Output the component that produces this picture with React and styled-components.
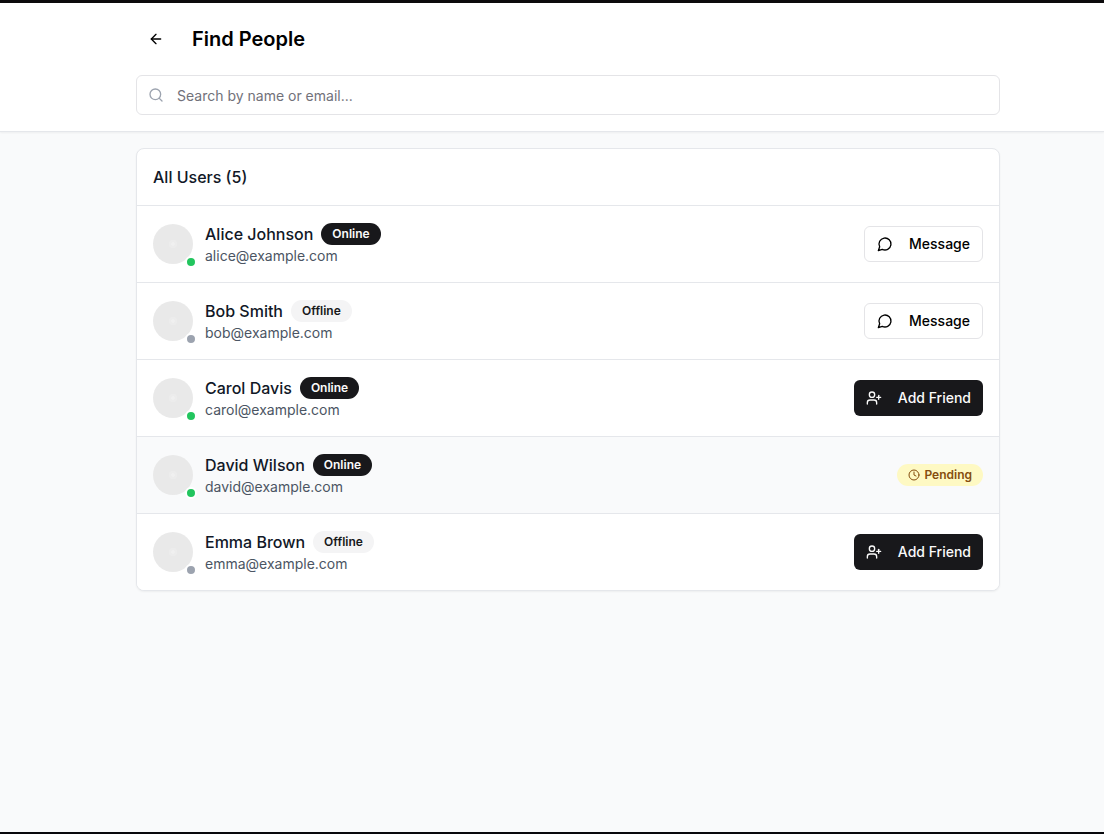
import React from "react";
import styled, { createGlobalStyle, css } from "styled-components";
import { ArrowLeft, Search, UserPlus, Clock } from "lucide-react";

const GlobalStyle = createGlobalStyle`
  *, *::before, *::after { box-sizing: border-box; }
  body {
    margin: 0;
    background: #f9fafb;
    color: #000;
    font-family: Inter, "Liberation Sans", sans-serif;
    font-size: 16px;
    line-height: 24px;
  }
`;

const Page = styled.div`
  height: 100vh;
  overflow: hidden;
  background: #f9fafb;
  border-top: 3px solid #0c0b0c;
  border-bottom: 2px solid #08080c;
`;

const Header = styled.header`
  background: #fff;
  border-bottom: 1px solid #e5e7eb;
  box-shadow: 0 1px 2px 0 rgba(0, 0, 0, 0.05);
`;

const Container = styled.div`
  width: 896px;
  margin: 0 88px 0 auto;
  padding: 16px;
`;

const TitleBar = styled.div`
  display: flex;
  align-items: center;
  gap: 16px;
  margin-bottom: 16px;
`;

const BackButton = styled.button`
  display: flex;
  align-items: center;
  justify-content: center;
  width: 40px;
  height: 40px;
  padding: 0;
  border: 0;
  border-radius: 6px;
  background: transparent;
  color: #000;
`;

const Title = styled.h1`
  margin: 0;
  font-size: 20px;
  line-height: 28px;
  font-weight: 600;
`;

const SearchField = styled.label`
  display: flex;
  align-items: center;
  gap: 13px;
  height: 40px;
  padding: 0 12px 0 11px;
  border: 1px solid #e4e4e7;
  border-radius: 6px;
  background: #fff;
  color: #9ca3af;
`;

const SearchInput = styled.input`
  flex: 1;
  height: 20px;
  margin: 1px 0 0;
  padding: 0;
  border: 0;
  outline: 0;
  background: transparent;
  color: #000;
  font: inherit;
  font-size: 14px;
  line-height: 20px;
  &::placeholder { color: #71717a; opacity: 1; }
`;

const Card = styled.section`
  background: #fff;
  border: 1px solid #e5e7eb;
  border-radius: 8px;
  box-shadow: 0 1px 2px 0 rgba(0, 0, 0, 0.05);
  overflow: hidden;
`;

const CardTitle = styled.h2`
  margin: 0;
  padding: 16px;
  font-size: 16px;
  line-height: 24px;
  font-weight: 500;
  color: #111827;
`;

const Row = styled.div`
  display: flex;
  align-items: center;
  justify-content: space-between;
  padding: 16px;
  border-top: 1px solid #e5e7eb;
  background: ${(p) => (p.$highlighted ? "#f9fafb" : "#fff")};
`;

const Person = styled.div`
  display: flex;
  align-items: center;
  gap: 12px;
`;

const Avatar = styled.div`
  position: relative;
  width: 40px;
  height: 40px;
  border-radius: 50%;
  background: radial-gradient(circle, #f0f0f0 0 1.5px, #ececec 2px 4px, #e9e9e9 4.5px);
`;

const StatusDot = styled.span`
  position: absolute;
  right: -4px;
  bottom: -4px;
  width: 12px;
  height: 12px;
  border: 2px solid #fff;
  border-radius: 50%;
  background: ${(p) => (p.$online ? "#22c55e" : "#9ca3af")};
`;

const NameLine = styled.div`
  display: flex;
  align-items: center;
  gap: 8px;
  height: 24px;
`;

const Name = styled.span`
  font-weight: 500;
  color: #111827;
`;

const Email = styled.div`
  font-size: 14px;
  line-height: 20px;
  color: #4b5563;
`;

const badgeTones = {
  online: css`background: #18181b; color: #fafafa;`,
  offline: css`background: #f4f4f5; color: #18181b;`,
  pending: css`background: #fef9c3; color: #854d0e;`,
};

const Badge = styled.span`
  display: inline-flex;
  align-items: center;
  gap: 4px;
  height: 22px;
  padding: 0 11px;
  border-radius: 999px;
  font-size: 12px;
  line-height: 16px;
  font-weight: 600;
  ${(p) => badgeTones[p.$tone]}
`;

const ActionButton = styled.button`
  display: inline-flex;
  align-items: center;
  gap: 16px;
  height: 36px;
  padding: 0 12px;
  border: ${(p) => (p.$primary ? "0" : "1px solid #e4e4e7")};
  border-radius: 6px;
  background: ${(p) => (p.$primary ? "#18181b" : "#fff")};
  color: ${(p) => (p.$primary ? "#fafafa" : "#000")};
  font: inherit;
  font-size: 14px;
  line-height: 20px;
  font-weight: 500;
`;

const users = [
  { name: "Alice Johnson", email: "alice@example.com", online: true, relation: "friend" },
  { name: "Bob Smith", email: "bob@example.com", online: false, relation: "friend" },
  { name: "Carol Davis", email: "carol@example.com", online: true, relation: "none" },
  { name: "David Wilson", email: "david@example.com", online: true, relation: "pending" },
  { name: "Emma Brown", email: "emma@example.com", online: false, relation: "none" },
];

function MessageIcon() {
  return (
    <svg
      width="16"
      height="16"
      viewBox="0 0 24 24"
      fill="none"
      stroke="currentColor"
      strokeWidth="2"
      strokeLinecap="round"
      strokeLinejoin="round"
    >
      <path d="M7.9 20A9 9 0 1 0 4 16.1L2 22Z" />
    </svg>
  );
}

function RowAction({ relation }) {
  if (relation === "friend") {
    return (
      <ActionButton>
        <MessageIcon />
        Message
      </ActionButton>
    );
  }
  if (relation === "pending") {
    return (
      <Badge $tone="pending">
        <Clock size={12} />
        Pending
      </Badge>
    );
  }
  return (
    <ActionButton $primary>
      <UserPlus size={16} />
      Add Friend
    </ActionButton>
  );
}

export default function App() {
  return (
    <Page>
      <GlobalStyle />
      <Header>
        <Container>
          <TitleBar>
            <BackButton aria-label="Back">
              <ArrowLeft size={16} />
            </BackButton>
            <Title>Find People</Title>
          </TitleBar>
          <SearchField>
            <Search size={16} />
            <SearchInput placeholder="Search by name or email..." />
          </SearchField>
        </Container>
      </Header>
      <Container as="main">
        <Card>
          <CardTitle>All Users ({users.length})</CardTitle>
          {users.map((user) => (
            <Row key={user.email} $highlighted={user.relation === "pending"}>
              <Person>
                <Avatar>
                  <StatusDot $online={user.online} />
                </Avatar>
                <div>
                  <NameLine>
                    <Name>{user.name}</Name>
                    <Badge $tone={user.online ? "online" : "offline"}>
                      {user.online ? "Online" : "Offline"}
                    </Badge>
                  </NameLine>
                  <Email>{user.email}</Email>
                </div>
              </Person>
              <RowAction relation={user.relation} />
            </Row>
          ))}
        </Card>
      </Container>
    </Page>
  );
}
